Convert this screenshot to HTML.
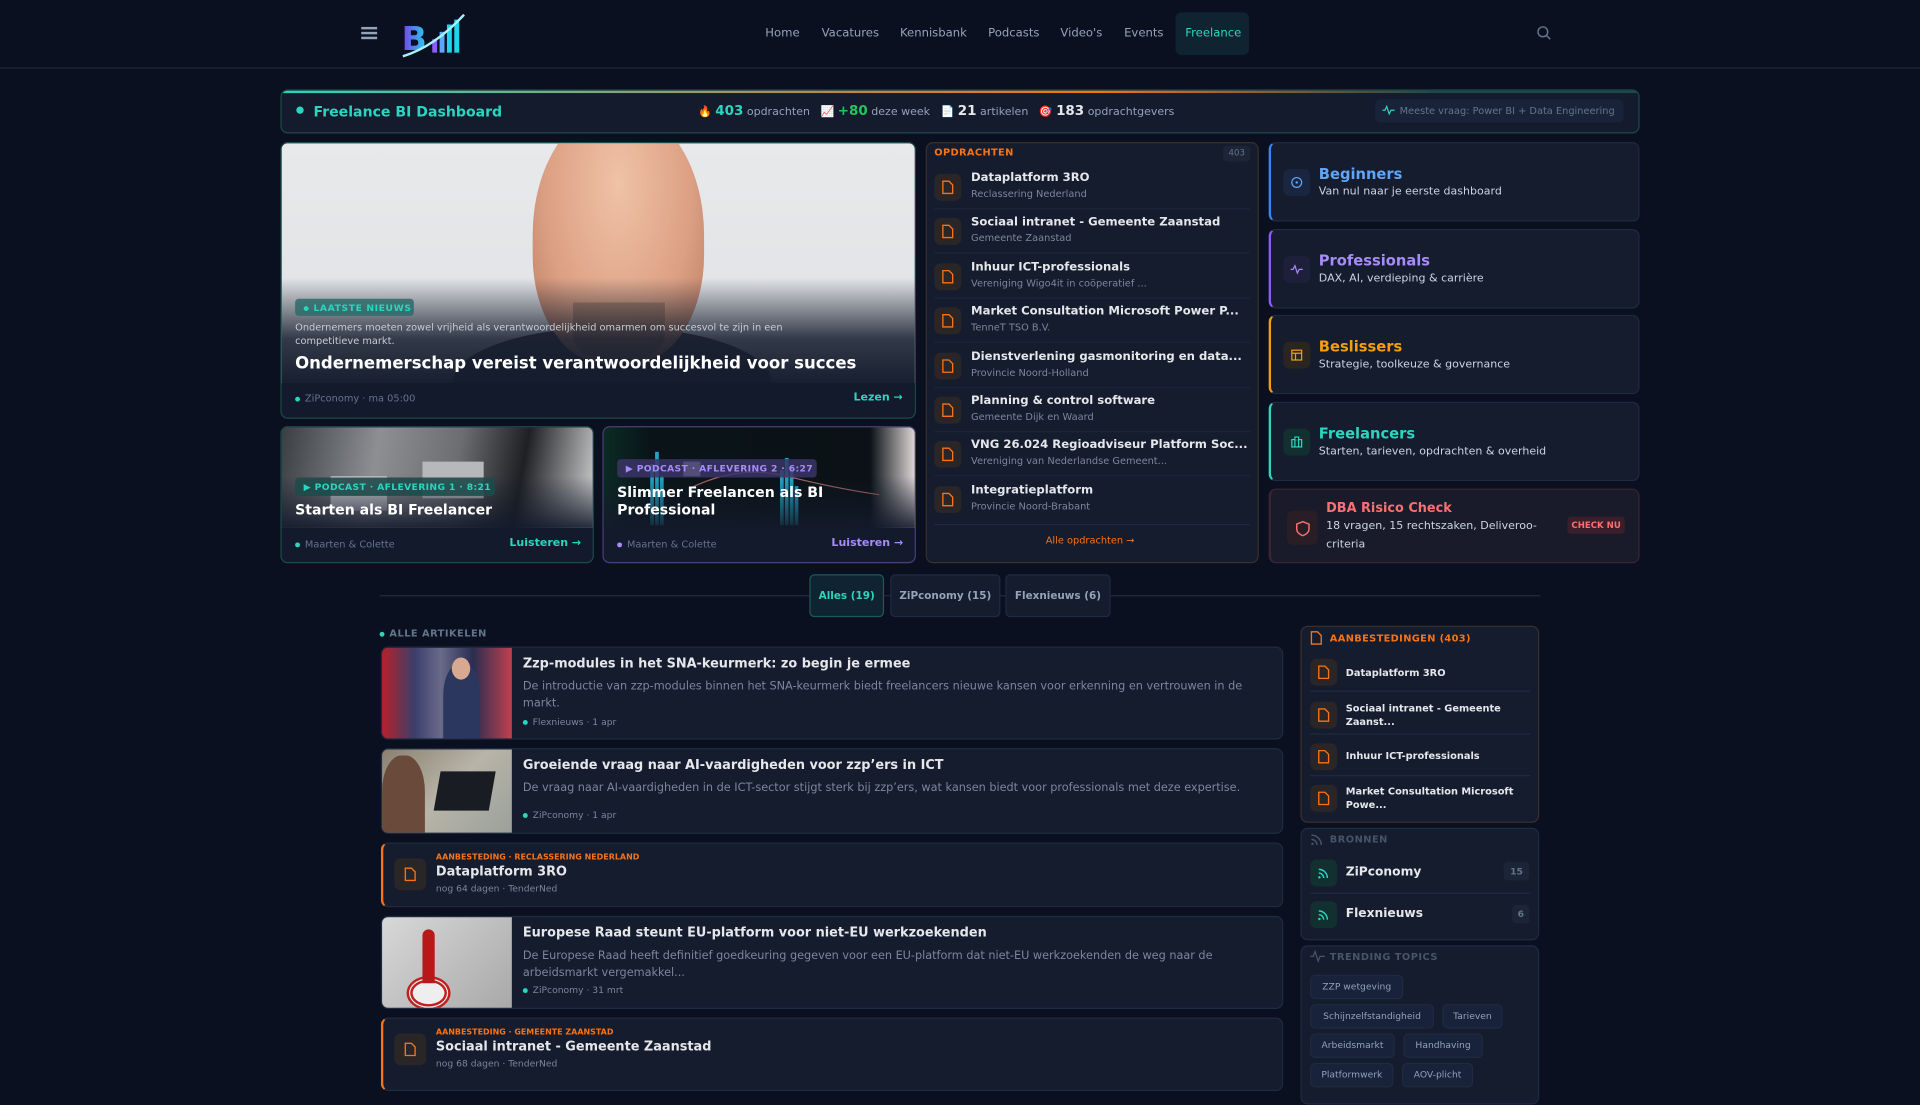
<!DOCTYPE html>
<html><head><meta charset="utf-8"><style>
*{box-sizing:border-box;margin:0;padding:0}
html,body{width:1920px;height:1080px;overflow:hidden;background:#0a1020;font-family:"DejaVu Sans","Liberation Sans",sans-serif;color:#e2e8f0}
#w{position:absolute;left:0;top:0;width:1568px;height:882px;transform:scale(1.22449);transform-origin:0 0;background:#0a1020}
.a{position:absolute}
.nav{font-size:9.5px;color:#94a3b8}
.card{position:absolute;background:#141c2d;border:1px solid #1f2b40;border-radius:6px}
.ico{position:absolute;width:22px;height:22px;border-radius:5px;background:#2a2527;display:flex;align-items:center;justify-content:center}
.t{font-weight:bold;color:#e5e7eb}
.s{color:#7c8799}
.dot{display:inline-block;width:5px;height:5px;border-radius:50%;background:#2dd4bf;margin-right:4px;vertical-align:middle}
</style></head><body><div id="w">
<!-- header -->
<div class="a" style="left:0;top:0;width:1568px;height:56px;border-bottom:1px solid #1c2a44;background:#0a1020"></div>
<div class="a" style="left:295px;top:22px;width:13px;height:2px;background:#94a3b8;box-shadow:0 4px 0 #94a3b8,0 8px 0 #94a3b8"></div>
<svg class="a" style="left:325px;top:8px" width="60" height="42" viewBox="0 0 60 42">
<defs><linearGradient id="lg" x1="0" x2="1"><stop offset="0" stop-color="#7c3aed"/><stop offset="1" stop-color="#22d3ee"/></linearGradient></defs>
<text x="3" y="33" font-family="DejaVu Sans" font-weight="bold" font-size="27" fill="url(#lg)">B</text>
<rect x="28" y="24" width="4" height="11" fill="#8b5cf6"/><rect x="34" y="18" width="4" height="17" fill="#60a5fa"/><rect x="40" y="12" width="4" height="23" fill="#22d3ee"/><rect x="46" y="8" width="4" height="27" fill="#22d3ee"/>
<path d="M4 38 Q30 30 54 4" stroke="#a5f3fc" stroke-width="2" fill="none"/></svg>
<div class="a nav" style="left:625px;top:22px">Home</div>
<div class="a nav" style="left:671px;top:22px">Vacatures</div>
<div class="a nav" style="left:735px;top:22px">Kennisbank</div>
<div class="a nav" style="left:807px;top:22px">Podcasts</div>
<div class="a nav" style="left:866px;top:22px">Video's</div>
<div class="a nav" style="left:918px;top:22px">Events</div>
<div class="a" style="left:960px;top:10px;width:60px;height:35px;border-radius:5px;background:#0f2430"></div>
<div class="a nav" style="left:968px;top:22px;color:#2dd4bf">Freelance</div>
<svg class="a" style="left:1255px;top:21px" width="12" height="12" viewBox="0 0 12 12"><circle cx="5" cy="5" r="4" stroke="#64748b" stroke-width="1.2" fill="none"/><path d="M8 8l3 3" stroke="#64748b" stroke-width="1.2"/></svg>

<!-- dashboard bar -->
<div class="a" style="left:229px;top:73px;width:1110px;height:36px;border:1px solid #1d4a4a;border-radius:6px;background:#131b2c;overflow:hidden">
<div style="height:2px;background:linear-gradient(90deg,#2dd4bf,#b88a4a 40%,#f97316 60%,#1d4a4a 85%)"></div></div>
<div class="a dot" style="left:242px;top:87px;width:6px;height:6px"></div>
<div class="a" style="left:256px;top:84px;font-size:11.5px;font-weight:bold;color:#2dd4bf">Freelance BI Dashboard</div>
<div class="a" style="left:570px;top:84px;font-size:9px;color:#94a3b8;white-space:nowrap">🔥 <b style="color:#2dd4bf;font-size:11px">403</b> opdrachten &nbsp; 📈 <b style="color:#22c55e;font-size:11px">+80</b> deze week &nbsp; 📄 <b style="color:#e5e7eb;font-size:11px">21</b> artikelen &nbsp; 🎯 <b style="color:#e5e7eb;font-size:11px">183</b> opdrachtgevers</div>
<div class="a" style="left:1123px;top:81px;width:203px;height:19px;border-radius:4px;background:#18233a;font-size:8px;color:#64748b;padding:5px 0 0 20px;white-space:nowrap">Meeste vraag: Power BI + Data Engineering</div>
<svg class="a" style="left:1129px;top:85px" width="10" height="10" viewBox="0 0 10 10"><path d="M0 5h2l1.5-3 2 6 1.5-3h3" stroke="#2dd4bf" fill="none" stroke-width="1"/></svg>

<!-- hero -->
<div class="a" style="left:229px;top:116px;width:519px;height:226px;border:1px solid #1d4a4a;border-radius:6px;overflow:hidden;background:#141c2d">
<div style="position:absolute;left:0;top:0;width:519px;height:196px;background:linear-gradient(#e8e9eb,#dfe1e4)"></div>
<div style="position:absolute;left:140px;top:150px;width:260px;height:90px;border-radius:50% 50% 0 0;background:#3e3d46"></div>
<div style="position:absolute;left:205px;top:-30px;width:140px;height:210px;border-radius:50% 50% 42% 42%;background:radial-gradient(ellipse at 50% 30%,#f0c2a6,#dca084 60%,#b87a60)"></div>
<div style="position:absolute;left:238px;top:130px;width:75px;height:48px;border-radius:0 0 45% 45%;background:#8a6a58;opacity:.6"></div>
<div style="position:absolute;left:0;top:110px;width:519px;height:90px;background:linear-gradient(rgba(20,28,45,0),rgba(20,28,45,.85) 55%,#141c2d)"></div>
<div style="position:absolute;left:0;top:196px;width:519px;height:30px;background:#131a2b"></div>
</div>
<div class="a" style="left:241px;top:244px;width:97px;height:14px;border-radius:3px;background:#2d6b6a;opacity:.85"></div>
<div class="a" style="left:248px;top:247px;font-size:7.5px;font-weight:bold;letter-spacing:.5px;color:#2dd4bf"><span class="dot" style="width:4px;height:4px"></span>LAATSTE NIEUWS</div>
<div class="a" style="left:241px;top:263px;width:440px;font-size:8px;line-height:10.5px;color:#c8ccd3">Ondernemers moeten zowel vrijheid als verantwoordelijkheid omarmen om succesvol te zijn in een competitieve markt.</div>
<div class="a" style="left:241px;top:289px;font-size:13.5px;font-weight:bold;color:#fff">Ondernemerschap vereist verantwoordelijkheid voor succes</div>
<div class="a" style="left:241px;top:321px;font-size:8px;color:#64748b"><span class="dot" style="width:4px;height:4px"></span>ZiPconomy · ma 05:00</div>
<div class="a" style="left:697px;top:320px;font-size:9px;font-weight:bold;color:#2dd4bf">Lezen →</div>

<!-- podcast 1 -->
<div class="a" style="left:229px;top:348px;width:256px;height:112px;border:1px solid #1d4a4a;border-radius:6px;overflow:hidden;background:#131a2b">
<div style="position:absolute;left:0;top:0;width:256px;height:82px;background:linear-gradient(100deg,#3a3d42,#8d8f93 30%,#6b6d71 55%,#1e2024 75%,#d8d8d8)"></div>
<div style="position:absolute;left:40px;top:40px;width:46px;height:28px;background:#c9cbcf"></div>
<div style="position:absolute;left:115px;top:28px;width:50px;height:30px;background:#b6b8bc"></div>
<div style="position:absolute;left:0;top:40px;width:256px;height:42px;background:linear-gradient(rgba(19,26,43,0),rgba(19,26,43,.9))"></div></div>
<div class="a" style="left:241px;top:390px;width:163px;height:15px;border-radius:3px;background:#1e4a4a;opacity:.9"></div>
<div class="a" style="left:248px;top:393px;font-size:7.5px;font-weight:bold;color:#2dd4bf;letter-spacing:.3px">▶ PODCAST · AFLEVERING 1 · 8:21</div>
<div class="a" style="left:241px;top:409px;font-size:11.5px;font-weight:bold;color:#fff">Starten als BI Freelancer</div>
<div class="a" style="left:241px;top:440px;font-size:8px;color:#64748b"><span class="dot" style="width:4px;height:4px"></span>Maarten &amp; Colette</div>
<div class="a" style="left:416px;top:439px;font-size:9px;font-weight:bold;color:#2dd4bf">Luisteren →</div>

<!-- podcast 2 -->
<div class="a" style="left:492px;top:348px;width:256px;height:112px;border:1px solid #4a3f7a;border-radius:6px;overflow:hidden;background:#131a2b">
<div style="position:absolute;left:0;top:0;width:256px;height:82px;background:linear-gradient(90deg,#0c2a24,#0a1418 15%,#0b1116 85%,#e8e0e0)"></div>
<svg style="position:absolute;left:10px;top:10px" width="220" height="72"><g fill="#22a5c4"><rect x="28" y="20" width="3" height="50"/><rect x="32" y="10" width="3" height="60"/><rect x="36" y="30" width="3" height="40"/><rect x="134" y="25" width="3" height="45"/><rect x="138" y="15" width="3" height="55"/><rect x="142" y="22" width="3" height="48"/><rect x="146" y="38" width="3" height="32"/></g><rect x="55" y="18" width="14" height="12" fill="#ddd"/><path d="M60 40 Q100 20 140 30 T215 45" stroke="#a66" fill="none"/></svg>
<div style="position:absolute;left:0;top:40px;width:256px;height:42px;background:linear-gradient(rgba(19,26,43,0),rgba(19,26,43,.9))"></div></div>
<div class="a" style="left:504px;top:375px;width:163px;height:15px;border-radius:3px;background:#3a3566;opacity:.85"></div>
<div class="a" style="left:511px;top:378px;font-size:7.5px;font-weight:bold;color:#a78bfa;letter-spacing:.3px">▶ PODCAST · AFLEVERING 2 · 6:27</div>
<div class="a" style="left:504px;top:395px;font-size:11.5px;line-height:14px;font-weight:bold;color:#fff;width:200px">Slimmer Freelancen als BI Professional</div>
<div class="a" style="left:504px;top:440px;font-size:8px;color:#64748b"><span class="dot" style="width:4px;height:4px;background:#a78bfa"></span>Maarten &amp; Colette</div>
<div class="a" style="left:679px;top:439px;font-size:9px;font-weight:bold;color:#a78bfa">Luisteren →</div>

<!-- opdrachten -->
<div class="card" style="left:756px;top:116px;width:272px;height:344px;border-color:#3a2f2a"></div>
<div class="a" style="left:763px;top:120px;font-size:8px;font-weight:bold;color:#f97316;letter-spacing:.3px">OPDRACHTEN</div>
<div class="a" style="left:999px;top:119px;width:22px;height:13px;border-radius:3px;background:#1c2536;font-size:7px;color:#64748b;text-align:center;line-height:13px">403</div>
<div id="op"></div>
<div class="a" style="left:763px;top:428px;width:258px;height:1px;background:#1f2b40"></div>
<div class="a" style="left:854px;top:437px;font-size:8px;color:#f97316">Alle opdrachten →</div>

<!-- right cards -->
<div class="card" style="left:1036px;top:116px;width:303px;height:65px;border-left:2px solid #3b82f6"></div>
<div class="card" style="left:1036px;top:187px;width:303px;height:65px;border-left:2px solid #8b5cf6"></div>
<div class="card" style="left:1036px;top:257px;width:303px;height:65px;border-left:2px solid #f59e0b"></div>
<div class="card" style="left:1036px;top:328px;width:303px;height:65px;border-left:2px solid #2dd4bf"></div>
<div class="card" style="left:1036px;top:399px;width:303px;height:61px;border-left:2px solid #ef4444;border-color:#3a2530;background:#191a2a"></div>
<div class="ico" style="left:1048px;top:138px;background:#1a2540"><svg width="10" height="10"><circle cx="5" cy="5" r="4" stroke="#60a5fa" fill="none"/><circle cx="5" cy="5" r="1" fill="#60a5fa"/></svg></div>
<div class="ico" style="left:1048px;top:209px;background:#1e1f3a"><svg width="10" height="10"><path d="M0 5h2l1.5-3 2 6 1.5-3h3" stroke="#a78bfa" fill="none"/></svg></div>
<div class="ico" style="left:1048px;top:279px;background:#2a2520"><svg width="10" height="10"><rect x="1" y="1" width="8" height="8" stroke="#f59e0b" fill="none"/><path d="M1 3.5h8M4 3.5v5.5" stroke="#f59e0b"/></svg></div>
<div class="ico" style="left:1048px;top:350px;background:#12302f"><svg width="10" height="10"><rect x="1" y="3" width="8" height="6" stroke="#2dd4bf" fill="none"/><path d="M3.5 3V1h3v2M3.5 3v6M6.5 3v6" stroke="#2dd4bf"/></svg></div>
<div class="ico" style="left:1051px;top:417px;width:25px;height:28px;background:#2a1e26"><svg width="12" height="13"><path d="M6 1L11 3v4c0 3-2.5 4.5-5 5.5C3.5 11.5 1 10 1 7V3z" stroke="#f87171" fill="none" stroke-width="1.2"/></svg></div>
<div class="a" style="left:1077px;top:135px;font-size:12px;font-weight:bold;color:#60a5fa">Beginners</div>
<div class="a" style="left:1077px;top:152px;font-size:9px;color:#cbd5e1">Van nul naar je eerste dashboard</div>
<div class="a" style="left:1077px;top:206px;font-size:12px;font-weight:bold;color:#a78bfa">Professionals</div>
<div class="a" style="left:1077px;top:223px;font-size:9px;color:#cbd5e1">DAX, AI, verdieping &amp; carrière</div>
<div class="a" style="left:1077px;top:276px;font-size:12px;font-weight:bold;color:#f59e0b">Beslissers</div>
<div class="a" style="left:1077px;top:293px;font-size:9px;color:#cbd5e1">Strategie, toolkeuze &amp; governance</div>
<div class="a" style="left:1077px;top:347px;font-size:12px;font-weight:bold;color:#2dd4bf">Freelancers</div>
<div class="a" style="left:1077px;top:364px;font-size:9px;color:#cbd5e1">Starten, tarieven, opdrachten &amp; overheid</div>
<div class="a" style="left:1083px;top:409px;font-size:10.5px;font-weight:bold;color:#f87171">DBA Risico Check</div>
<div class="a" style="left:1083px;top:423px;width:190px;font-size:9px;line-height:14.5px;color:#cbd5e1">18 vragen, 15 rechtszaken, Deliveroo-criteria</div>
<div class="a" style="left:1280px;top:422px;width:47px;height:14px;border-radius:3px;background:#3a1e2a;font-size:7px;font-weight:bold;color:#f87171;text-align:center;line-height:14px">CHECK NU</div>

<!-- tabs -->
<div class="a" style="left:310px;top:486px;width:948px;height:1px;background:#1e2b42"></div>
<div class="a" style="left:661px;top:469px;width:61px;height:35px;border:1px solid #1d5a55;border-radius:4px;background:#0f2430;font-size:8.5px;font-weight:bold;color:#2dd4bf;text-align:center;line-height:35px">Alles (19)</div>
<div class="a" style="left:727px;top:469px;width:90px;height:35px;border:1px solid #1f2b40;border-radius:4px;background:#141c2d;font-size:8.5px;font-weight:bold;color:#94a3b8;text-align:center;line-height:35px">ZiPconomy (15)</div>
<div class="a" style="left:821px;top:469px;width:86px;height:35px;border:1px solid #1f2b40;border-radius:4px;background:#141c2d;font-size:8.5px;font-weight:bold;color:#94a3b8;text-align:center;line-height:35px">Flexnieuws (6)</div>
<div class="a" style="left:310px;top:513px;font-size:8px;font-weight:bold;color:#64748b;letter-spacing:.4px"><span class="dot" style="width:4px;height:4px"></span>ALLE ARTIKELEN</div>

<!-- articles -->
<div class="card" style="left:311px;top:528px;width:737px;height:76px;overflow:hidden">
<div style="position:absolute;left:0;top:0;width:106px;height:76px;background:linear-gradient(90deg,#b8202a 0,#3a3e6a 25%,#6a6a8a 45%,#2a2e50 70%,#c04050)"></div>
<div style="position:absolute;left:50px;top:14px;width:30px;height:62px;border-radius:40% 40% 0 0;background:#2c3760"></div>
<div style="position:absolute;left:57px;top:8px;width:15px;height:18px;border-radius:50%;background:#d9a890"></div></div>
<div class="a t" style="left:427px;top:536px;font-size:10.5px">Zzp-modules in het SNA-keurmerk: zo begin je ermee</div>
<div class="a s" style="left:427px;top:554px;width:600px;font-size:9.2px;line-height:13.5px">De introductie van zzp-modules binnen het SNA-keurmerk biedt freelancers nieuwe kansen voor erkenning en vertrouwen in de markt.</div>
<div class="a s" style="left:427px;top:585px;font-size:7.5px"><span class="dot" style="width:4px;height:4px"></span>Flexnieuws · 1 apr</div>

<div class="card" style="left:311px;top:611px;width:737px;height:70px;overflow:hidden">
<div style="position:absolute;left:0;top:0;width:106px;height:70px;background:linear-gradient(135deg,#8a8070,#b8b4a8 50%,#9aa09a)"></div>
<div style="position:absolute;left:0;top:5px;width:35px;height:65px;border-radius:45% 45% 0 0;background:#6a4a3a"></div>
<div style="position:absolute;left:45px;top:18px;width:45px;height:32px;background:#1a1c24;transform:skewX(-10deg)"></div></div>
<div class="a t" style="left:427px;top:619px;font-size:10.5px">Groeiende vraag naar AI-vaardigheden voor zzp’ers in ICT</div>
<div class="a s" style="left:427px;top:638px;font-size:9.2px;white-space:nowrap">De vraag naar AI-vaardigheden in de ICT-sector stijgt sterk bij zzp’ers, wat kansen biedt voor professionals met deze expertise.</div>
<div class="a s" style="left:427px;top:661px;font-size:7.5px"><span class="dot" style="width:4px;height:4px"></span>ZiPconomy · 1 apr</div>

<div class="card" style="left:311px;top:688px;width:737px;height:53px;border-left:2px solid #f97316"></div>
<div class="ico" style="left:322px;top:701px;width:26px;height:26px"><svg width="10" height="12"><path d="M1 1h5l3 3v7H1z" stroke="#f97316" fill="none" stroke-width="1.1"/></svg></div>
<div class="a" style="left:356px;top:696px;font-size:6.5px;font-weight:bold;color:#f97316">AANBESTEDING · RECLASSERING NEDERLAND</div>
<div class="a t" style="left:356px;top:706px;font-size:10.5px">Dataplatform 3RO</div>
<div class="a s" style="left:356px;top:721px;font-size:7.5px">nog 64 dagen · TenderNed</div>

<div class="card" style="left:311px;top:748px;width:737px;height:76px;overflow:hidden">
<div style="position:absolute;left:0;top:0;width:106px;height:76px;background:linear-gradient(135deg,#d8d8d8,#a8a8a8)"></div>
<div style="position:absolute;left:20px;top:48px;width:36px;height:28px;border-radius:50%;border:5px double #c02020;background:#eee"></div>
<div style="position:absolute;left:33px;top:10px;width:10px;height:44px;background:#b81818;border-radius:5px 5px 0 0"></div></div>
<div class="a t" style="left:427px;top:756px;font-size:10.5px">Europese Raad steunt EU-platform voor niet-EU werkzoekenden</div>
<div class="a s" style="left:427px;top:774px;width:600px;font-size:9.2px;line-height:13.5px">De Europese Raad heeft definitief goedkeuring gegeven voor een EU-platform dat niet-EU werkzoekenden de weg naar de arbeidsmarkt vergemakkel...</div>
<div class="a s" style="left:427px;top:804px;font-size:7.5px"><span class="dot" style="width:4px;height:4px"></span>ZiPconomy · 31 mrt</div>

<div class="card" style="left:311px;top:831px;width:737px;height:60px;border-left:2px solid #f97316"></div>
<div class="ico" style="left:322px;top:844px;width:26px;height:26px"><svg width="10" height="12"><path d="M1 1h5l3 3v7H1z" stroke="#f97316" fill="none" stroke-width="1.1"/></svg></div>
<div class="a" style="left:356px;top:839px;font-size:6.5px;font-weight:bold;color:#f97316">AANBESTEDING · GEMEENTE ZAANSTAD</div>
<div class="a t" style="left:356px;top:849px;font-size:10.5px">Sociaal intranet - Gemeente Zaanstad</div>
<div class="a s" style="left:356px;top:864px;font-size:7.5px">nog 68 dagen · TenderNed</div>

<!-- sidebar -->
<div class="card" style="left:1062px;top:511px;width:195px;height:161px;border-color:#3a2f2a"></div>
<svg class="a" style="left:1070px;top:515px" width="10" height="12"><path d="M1 1h5l3 3v7H1z" stroke="#f97316" fill="none" stroke-width="1.1"/></svg>
<div class="a" style="left:1086px;top:517px;font-size:8px;font-weight:bold;color:#f97316;letter-spacing:.3px">AANBESTEDINGEN (403)</div>
<div id="sb"></div>

<div class="card" style="left:1062px;top:676px;width:195px;height:92px"></div>
<svg class="a" style="left:1070px;top:680px" width="11" height="11"><path d="M1 2a8 8 0 0 1 8 8M1 5.5a4.5 4.5 0 0 1 4.5 4.5" stroke="#475569" fill="none" stroke-width="1.2"/><circle cx="1.8" cy="9.2" r="1" fill="#475569"/></svg>
<div class="a" style="left:1086px;top:681px;font-size:8px;font-weight:bold;color:#475569;letter-spacing:.4px">BRONNEN</div>
<div class="ico" style="left:1070px;top:702px;width:22px;height:22px;background:#12302f"><svg width="10" height="10"><path d="M1 2a7 7 0 0 1 7 7M1 5a4 4 0 0 1 4 4" stroke="#2dd4bf" fill="none" stroke-width="1.2"/><circle cx="1.5" cy="8.5" r="1" fill="#2dd4bf"/></svg></div>
<div class="a t" style="left:1099px;top:707px;font-size:10px">ZiPconomy</div>
<div class="a" style="left:1228px;top:704px;width:21px;height:15px;border-radius:3px;background:#1c2536;font-size:7.5px;font-weight:bold;color:#64748b;text-align:center;line-height:15px">15</div>
<div class="a" style="left:1070px;top:729px;width:180px;height:1px;background:#1f2b40"></div>
<div class="ico" style="left:1070px;top:736px;width:22px;height:22px;background:#12302f"><svg width="10" height="10"><path d="M1 2a7 7 0 0 1 7 7M1 5a4 4 0 0 1 4 4" stroke="#2dd4bf" fill="none" stroke-width="1.2"/><circle cx="1.5" cy="8.5" r="1" fill="#2dd4bf"/></svg></div>
<div class="a t" style="left:1099px;top:741px;font-size:10px">Flexnieuws</div>
<div class="a" style="left:1235px;top:739px;width:14px;height:15px;border-radius:3px;background:#1c2536;font-size:7.5px;font-weight:bold;color:#64748b;text-align:center;line-height:15px">6</div>

<div class="card" style="left:1062px;top:772px;width:195px;height:130px"></div>
<svg class="a" style="left:1070px;top:776px" width="12" height="10"><path d="M0 5h2.5l1.5-4 2.5 8 1.5-4h4" stroke="#475569" fill="none" stroke-width="1"/></svg>
<div class="a" style="left:1086px;top:777px;font-size:8px;font-weight:bold;color:#475569;letter-spacing:.4px">TRENDING TOPICS</div>
<div id="tg"></div>
</div>
<script>
var op=[["Dataplatform 3RO","Reclassering Nederland"],["Sociaal intranet - Gemeente Zaanstad","Gemeente Zaanstad"],["Inhuur ICT-professionals","Vereniging Wigo4it in coöperatief ..."],["Market Consultation Microsoft Power P...","TenneT TSO B.V."],["Dienstverlening gasmonitoring en data...","Provincie Noord-Holland"],["Planning & control software","Gemeente Dijk en Waard"],["VNG 26.024 Regioadviseur Platform Soc...","Vereniging van Nederlandse Gemeent..."],["Integratieplatform","Provincie Noord-Brabant"]];
var h="",doc='<svg width="10" height="12"><path d="M1 1h5l3 3v7H1z" stroke="#f97316" fill="none" stroke-width="1.1"/></svg>';
op.forEach(function(o,i){var y=140+i*36.4;
h+='<div class="ico" style="left:763px;top:'+(y+2)+'px;width:22px;height:22px">'+doc+'</div>';
h+='<div class="a t" style="left:793px;top:'+y+'px;font-size:9.5px;white-space:nowrap">'+o[0].replace("&","&amp;")+'</div>';
h+='<div class="a s" style="left:793px;top:'+(y+14)+'px;font-size:8px;white-space:nowrap">'+o[1]+'</div>';
if(i<7)h+='<div class="a" style="left:763px;top:'+(y+30)+'px;width:258px;height:1px;background:#1c2638"></div>';});
document.getElementById("op").outerHTML=h;
var sb=[["Dataplatform 3RO",548],["Sociaal intranet - Gemeente Zaanst...",577],["Inhuur ICT-professionals",616],["Market Consultation Microsoft Powe...",645]];h="";
sb.forEach(function(o,i){var c=[549,584,618,652][i];
h+='<div class="ico" style="left:1070px;top:'+(c-11)+'px;width:22px;height:22px">'+doc+'</div>';
h+='<div class="a t" style="left:1099px;top:'+(o[1]-4)+'px;width:155px;font-size:8px;line-height:11px">'+o[0]+'</div>';
if(i<3)h+='<div class="a" style="left:1070px;top:'+(c+15)+'px;width:180px;height:1px;background:#1f2b40"></div>';});
document.getElementById("sb").outerHTML=h;
var tg=[["ZZP wetgeving",1070,796,76],["Schijnzelfstandigheid",1070,820,101],["Tarieven",1178,820,49],["Arbeidsmarkt",1070,844,69],["Handhaving",1146,844,65],["Platformwerk",1070,868,68],["AOV-plicht",1145,868,58]];h="";
tg.forEach(function(t){h+='<div class="a" style="left:'+t[1]+'px;top:'+t[2]+'px;width:'+t[3]+'px;height:20px;border:1px solid #1f2b40;border-radius:4px;background:#18223a;font-size:7.5px;color:#94a3b8;text-align:center;line-height:18px">'+t[0]+'</div>';});
document.getElementById("tg").outerHTML=h;
</script>
</body></html>
